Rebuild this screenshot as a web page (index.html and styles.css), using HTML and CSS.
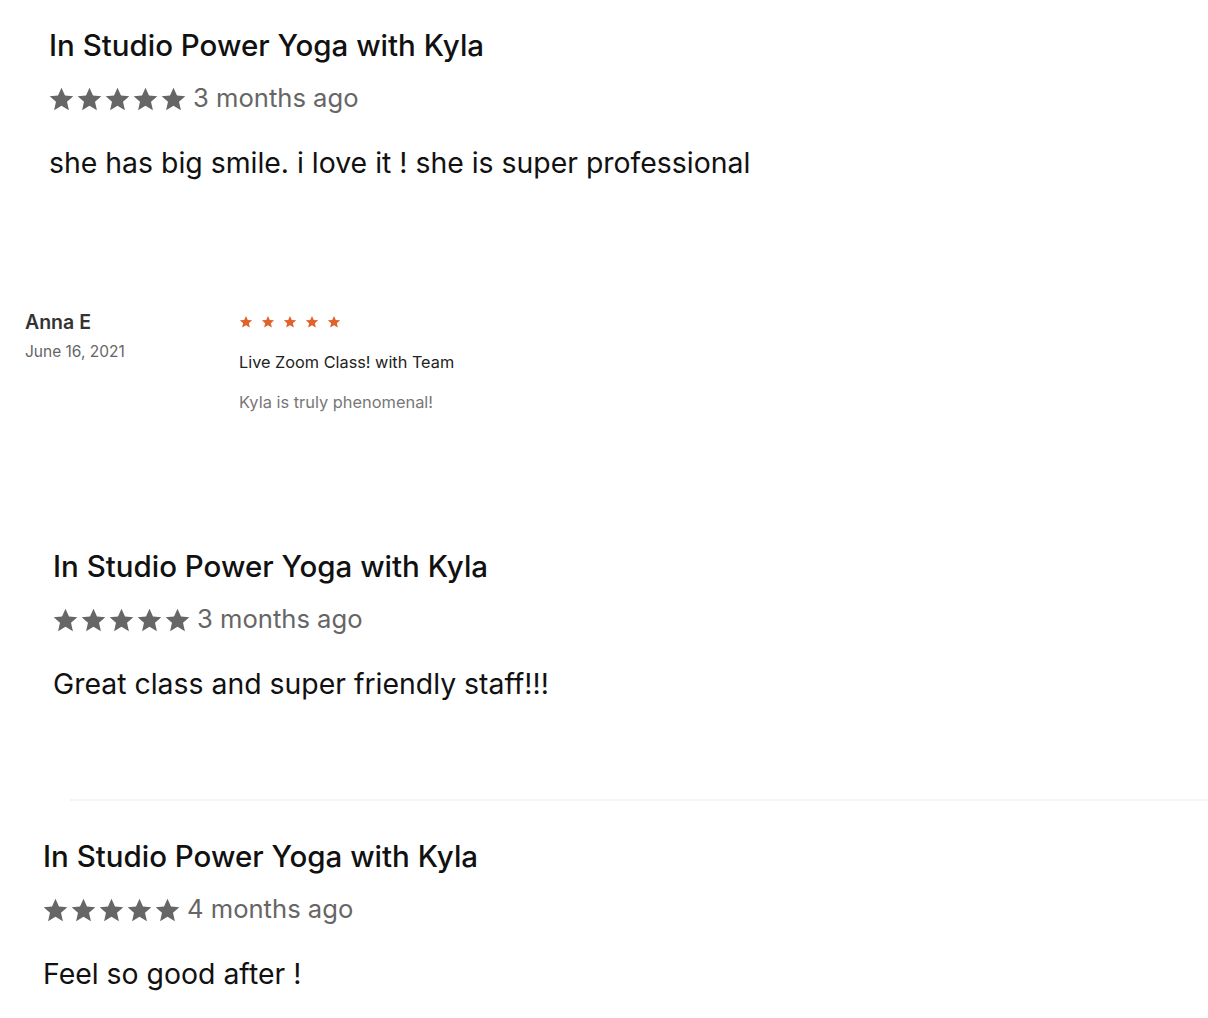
FILE: index.html
```html
<!DOCTYPE html>
<html>
<head>
<meta charset="utf-8">
<link rel="stylesheet" href="styles.css">
</head>
<body>
<svg width="0" height="0" class="defs">
  <defs>
    <symbol id="star" viewBox="0 0 24 24"><path d="M12 1.5l3.1 6.9 7.4.7-5.6 5 1.7 7.4L12 17.6l-6.6 3.9 1.7-7.4-5.6-5 7.4-.7z"/></symbol>
  </defs>
</svg>

<section class="review review-a">
  <h2 class="title">In Studio Power Yoga with Kyla</h2>
  <div class="meta">
    <span class="stars grey">
      <svg><use href="#star"/></svg><svg><use href="#star"/></svg><svg><use href="#star"/></svg><svg><use href="#star"/></svg><svg><use href="#star"/></svg>
    </span>
    <span class="ago">3 months ago</span>
  </div>
  <p class="body">she has big smile. i love it ! she is super professional</p>
</section>

<section class="alt-review">
  <div class="author">
    <div class="name">Anna E</div>
    <div class="date">June 16, 2021</div>
  </div>
  <div class="content">
    <span class="stars orange">
      <svg><use href="#star"/></svg><svg><use href="#star"/></svg><svg><use href="#star"/></svg><svg><use href="#star"/></svg><svg><use href="#star"/></svg>
    </span>
    <div class="cls">Live Zoom Class! with Team</div>
    <div class="txt">Kyla is truly phenomenal!</div>
  </div>
</section>

<section class="review review-b">
  <h2 class="title">In Studio Power Yoga with Kyla</h2>
  <div class="meta">
    <span class="stars grey">
      <svg><use href="#star"/></svg><svg><use href="#star"/></svg><svg><use href="#star"/></svg><svg><use href="#star"/></svg><svg><use href="#star"/></svg>
    </span>
    <span class="ago">3 months ago</span>
  </div>
  <p class="body">Great class and super friendly staff!!!</p>
</section>

<hr class="divider">

<section class="review review-c">
  <h2 class="title">In Studio Power Yoga with Kyla</h2>
  <div class="meta">
    <span class="stars grey">
      <svg><use href="#star"/></svg><svg><use href="#star"/></svg><svg><use href="#star"/></svg><svg><use href="#star"/></svg><svg><use href="#star"/></svg>
    </span>
    <span class="ago">4 months ago</span>
  </div>
  <p class="body">Feel so good after !</p>
</section>
</body>
</html>
```
FILE: styles.css
```css
html, body {
  margin: 0;
  padding: 0;
  background: #fff;
}
body {
  font-family: Inter, "Liberation Sans", sans-serif;
  color: #111;
  width: 1208px;
  height: 1018px;
  overflow: hidden;
}
.defs {
  position: absolute;
  width: 0;
  height: 0;
}
.review {
  display: flex;
  flex-direction: column;
}
.review-a { padding: 27px 0 0 49px; }
.review-b { padding: 137px 0 0 53px; }
.review-c { padding: 37px 0 0 43px; }

.title {
  margin: 0;
  font-size: 29.5px;
  font-weight: 500;
  line-height: 36px;
  color: #111;
}
.meta {
  display: flex;
  align-items: center;
  gap: 6px;
  margin-top: 23px;
  height: 27px;
}
.stars {
  display: flex;
}
.stars.grey { gap: 1px; margin-left: -1px; }
.stars.grey svg {
  width: 27px;
  height: 27px;
  fill: #666;
}
.ago {
  font-size: 25.6px;
  color: #666;
  line-height: 26px;
  margin-top: -4px;
}
.body {
  margin: 33px 0 0;
  font-size: 28.4px;
  line-height: 34px;
  color: #111;
}

.alt-review {
  display: flex;
  padding: 131px 0 0 25px;
}
.author {
  width: 214px;
}
.name {
  font-size: 19.5px;
  font-weight: 600;
  color: #333;
  line-height: 22px;
}
.date {
  margin-top: 10px;
  font-size: 15.5px;
  color: #666;
  line-height: 18px;
}
.content {
  display: flex;
  flex-direction: column;
  padding-top: 4px;
}
.stars.orange { gap: 8px; }
.stars.orange svg {
  width: 14px;
  height: 14px;
  fill: #e0622c;
}
.cls {
  margin-top: 24px;
  font-size: 16.3px;
  color: #222;
  line-height: 18px;
}
.txt {
  margin-top: 22px;
  font-size: 16.4px;
  color: #777;
  line-height: 18px;
}
.divider {
  border: 0;
  height: 2px;
  background: #f5f5f5;
  margin: 98px 0 0 70px;
}
```
